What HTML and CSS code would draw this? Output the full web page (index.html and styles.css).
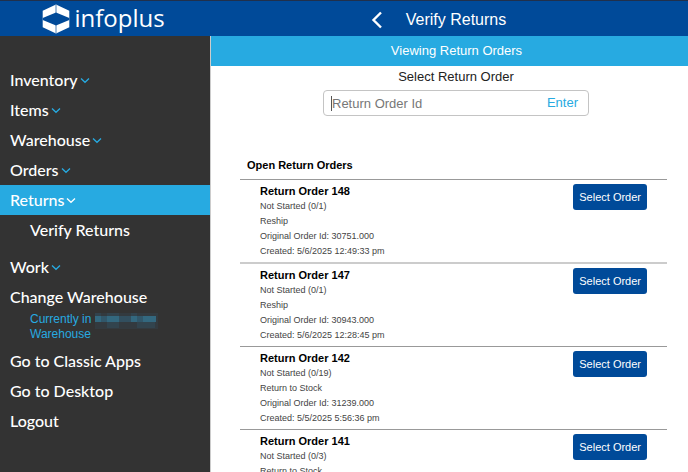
FILE: index.html
```html
<!DOCTYPE html>
<html lang="en">
<head>
<meta charset="utf-8">
<meta name="viewport" content="width=device-width, initial-scale=1">
<title>Verify Returns</title>
<link rel="stylesheet" href="styles.css">
</head>
<body>
<svg width="0" height="0" class="sprite" aria-hidden="true">
  <symbol id="chevron" viewBox="0 0 10 10"><path d="M1 3.500 5 7.300l4-3.800" fill="none" stroke="currentColor" stroke-width="1.300"/></symbol>
</svg>
<header class="topbar">
  <a class="brand" href="#">
    <svg class="brand-mark" viewBox="0 0 28 30" aria-hidden="true">
      <path fill="#fff" d="M14 .5 27.300 6.800V23.200L14 29.500.7 23.200V6.800z"/>
      <path fill="#004a99" d="M.7 14 14 8.600 27.300 14v2L14 21.400.7 16z"/>
      <path fill="none" stroke="#004a99" stroke-width=".7" d="M14 1v8M14 21v8"/>
    </svg>
    <span class="brand-name">infoplus</span>
  </a>
  <div class="titlebar">
    <button class="back" type="button" aria-label="Back">
      <svg viewBox="0 0 12 18" aria-hidden="true"><path d="M11 1.500 3.500 9l7.500 7.500" fill="none" stroke="#fff" stroke-width="2.400"/></svg>
    </button>
    <h1 class="title">Verify Returns</h1>
  </div>
</header>
<div class="layout">
  <nav class="sidebar">
    <button class="item" type="button">Inventory<svg class="chev"><use href="#chevron"/></svg></button>
    <button class="item" type="button">Items<svg class="chev"><use href="#chevron"/></svg></button>
    <button class="item" type="button">Warehouse<svg class="chev"><use href="#chevron"/></svg></button>
    <button class="item" type="button">Orders<svg class="chev"><use href="#chevron"/></svg></button>
    <button class="item active" type="button">Returns<svg class="chev"><use href="#chevron"/></svg></button>
    <a class="item child" href="#">Verify Returns</a>
    <button class="item" type="button">Work<svg class="chev"><use href="#chevron"/></svg></button>
    <a class="item" href="#">Change Warehouse</a>
    <p class="current">Currently in
      <svg class="redacted" viewBox="0 0 66 16" aria-hidden="true">
        <path fill="#333a3f" d="M0 0h63v16H0z"/>
        <path fill="#32424c" d="M0 0h6v3H0zM12 0h12v3H12zM36 0h6v3h-6z"/>
        <path fill="#31576a" d="M0 3h61v6H0z"/>
        <path fill="#33687f" d="M0 3h6v6H0zM12 3h12v6H12zM36 3h6v6h-6zM48 3h13v6H48z"/>
        <path fill="#324f5f" d="M24 3h12v6H24z"/>
        <path fill="#32444e" d="M12 9h12v6H12zM42 9h18v6H42z"/>
      </svg>
      Warehouse</p>
    <a class="item" href="#">Go to Classic Apps</a>
    <a class="item" href="#">Go to Desktop</a>
    <a class="item" href="#">Logout</a>
  </nav>
  <main class="main">
    <div class="banner">Viewing Return Orders</div>
    <form class="lookup">
      <label class="lookup-label" for="order-id">Select Return Order</label>
      <div class="field">
        <input class="field-input" id="order-id" type="text" placeholder="Return Order Id">
        <button class="enter" type="button">Enter</button>
      </div>
    </form>
    <section class="orders">
      <h2 class="orders-title">Open Return Orders</h2>
      <article class="order">
        <div class="details">
          <h3 class="order-name">Return Order 148</h3>
          <p>Not Started (0/1)</p>
          <p>Reship</p>
          <p>Original Order Id: 30751.000</p>
          <p>Created: 5/6/2025 12:49:33 pm</p>
        </div>
        <button class="select" type="button">Select Order</button>
      </article>
      <article class="order soft">
        <div class="details">
          <h3 class="order-name">Return Order 147</h3>
          <p>Not Started (0/1)</p>
          <p>Reship</p>
          <p>Original Order Id: 30943.000</p>
          <p>Created: 5/6/2025 12:28:45 pm</p>
        </div>
        <button class="select" type="button">Select Order</button>
      </article>
      <article class="order">
        <div class="details">
          <h3 class="order-name">Return Order 142</h3>
          <p>Not Started (0/19)</p>
          <p>Return to Stock</p>
          <p>Original Order Id: 31239.000</p>
          <p>Created: 5/5/2025 5:56:36 pm</p>
        </div>
        <button class="select" type="button">Select Order</button>
      </article>
      <article class="order">
        <div class="details">
          <h3 class="order-name">Return Order 141</h3>
          <p>Not Started (0/3)</p>
          <p>Return to Stock</p>
        </div>
        <button class="select" type="button">Select Order</button>
      </article>
    </section>
  </main>
</div>
</body>
</html>
```
FILE: styles.css
```css
* { box-sizing: border-box; margin: 0; padding: 0; }

body {
  display: flex;
  flex-direction: column;
  height: 100vh;
  overflow: hidden;
  background: #fff;
  font-family: "Liberation Sans", Arial, sans-serif;
}

button { border: 0; background: none; font: inherit; color: inherit; cursor: pointer; }
a { color: inherit; text-decoration: none; }
.sprite { position: absolute; }

.topbar {
  display: flex;
  flex: none;
  height: 36px;
  border-top: 1px solid #20304c;
  background: #004a99;
  color: #fff;
}

.brand {
  display: flex;
  align-items: center;
  justify-content: center;
  gap: 4px;
  width: 210px;
  padding-right: 3px;
}

.brand-mark { width: 28px; height: 30px; }
.brand-name { font: 24px/32px "Open Sans", sans-serif; padding-bottom: 2px; }

.titlebar {
  display: grid;
  flex: 1;
  grid-template-columns: 1fr auto 1fr;
  align-items: center;
  gap: 24px;
  padding: 2px 0 0 14px;
}

.back { justify-self: end; width: 12px; height: 18px; }
.back svg { display: block; width: 12px; height: 18px; }
.title { font-size: 16px; font-weight: 400; line-height: 20px; }

.layout { display: flex; flex: 1; min-height: 0; }

.sidebar {
  flex: none;
  width: 210px;
  padding-top: 29px;
  background: #333;
  color: #fff;
}

.item {
  display: flex;
  align-items: center;
  width: 100%;
  height: 30px;
  padding-left: 10px;
  font: 500 16px/30px Lato, sans-serif;
}

.chev { width: 10px; height: 10px; margin-left: 2px; color: #27aae1; }
.active { background: #27aae1; }
.active .chev { color: #fff; }
.child { height: 37px; padding: 0 0 7px 30px; }

.current {
  padding: 0 40px 5px 30px;
  color: #27aae1;
  font-size: 12px;
  line-height: 14px;
}

.redacted { width: 66px; height: 16px; margin: -2px 0; vertical-align: -4px; }

.main { flex: 1; min-width: 0; border-left: 1px solid #ccc; overflow: hidden; }

.banner {
  margin-left: -1px;
  padding-left: 15px;
  background: #27aae1;
  color: #fff;
  font-size: 13px;
  line-height: 30px;
  text-align: center;
}

.lookup {
  display: flex;
  flex-direction: column;
  align-items: center;
  padding: 1px 0 0 13px;
}

.lookup-label { color: #222; font-size: 13px; line-height: 20px; }

.field {
  display: flex;
  align-items: center;
  width: 100%;
  max-width: 266px;
  height: 26px;
  margin-top: 3px;
  padding: 0 10px 0 7px;
  border: 1px solid #c4c4c4;
  border-radius: 4px;
}

.field-input {
  flex: 1;
  min-width: 0;
  height: 15px;
  border: 0;
  border-left: 1px solid #555;
  outline: 0;
  background: none;
  font: 13px "Liberation Sans", Arial, sans-serif;
}

.field-input::placeholder { color: #777; opacity: 1; }
.enter { color: #27aae1; font-size: 13px; line-height: 20px; }

.orders { padding: 40px 21px 0 29px; }

.orders-title {
  padding: 1px 0 6px 7px;
  font-size: 11px;
  line-height: 16px;
}

.order {
  display: flex;
  justify-content: space-between;
  align-items: flex-start;
  padding: 3px 20px;
  border-top: 1px solid #999;
}

.soft { border-top: 2px solid #ccc; }
.details { color: #444; font-size: 9px; line-height: 15px; }
.order-name { color: #000; font-size: 11px; line-height: 16px; }

.select {
  height: 26px;
  margin-top: 1px;
  padding: 0 6px;
  border-radius: 3px;
  background: #004a99;
  color: #fff;
  font-size: 11px;
}
```
